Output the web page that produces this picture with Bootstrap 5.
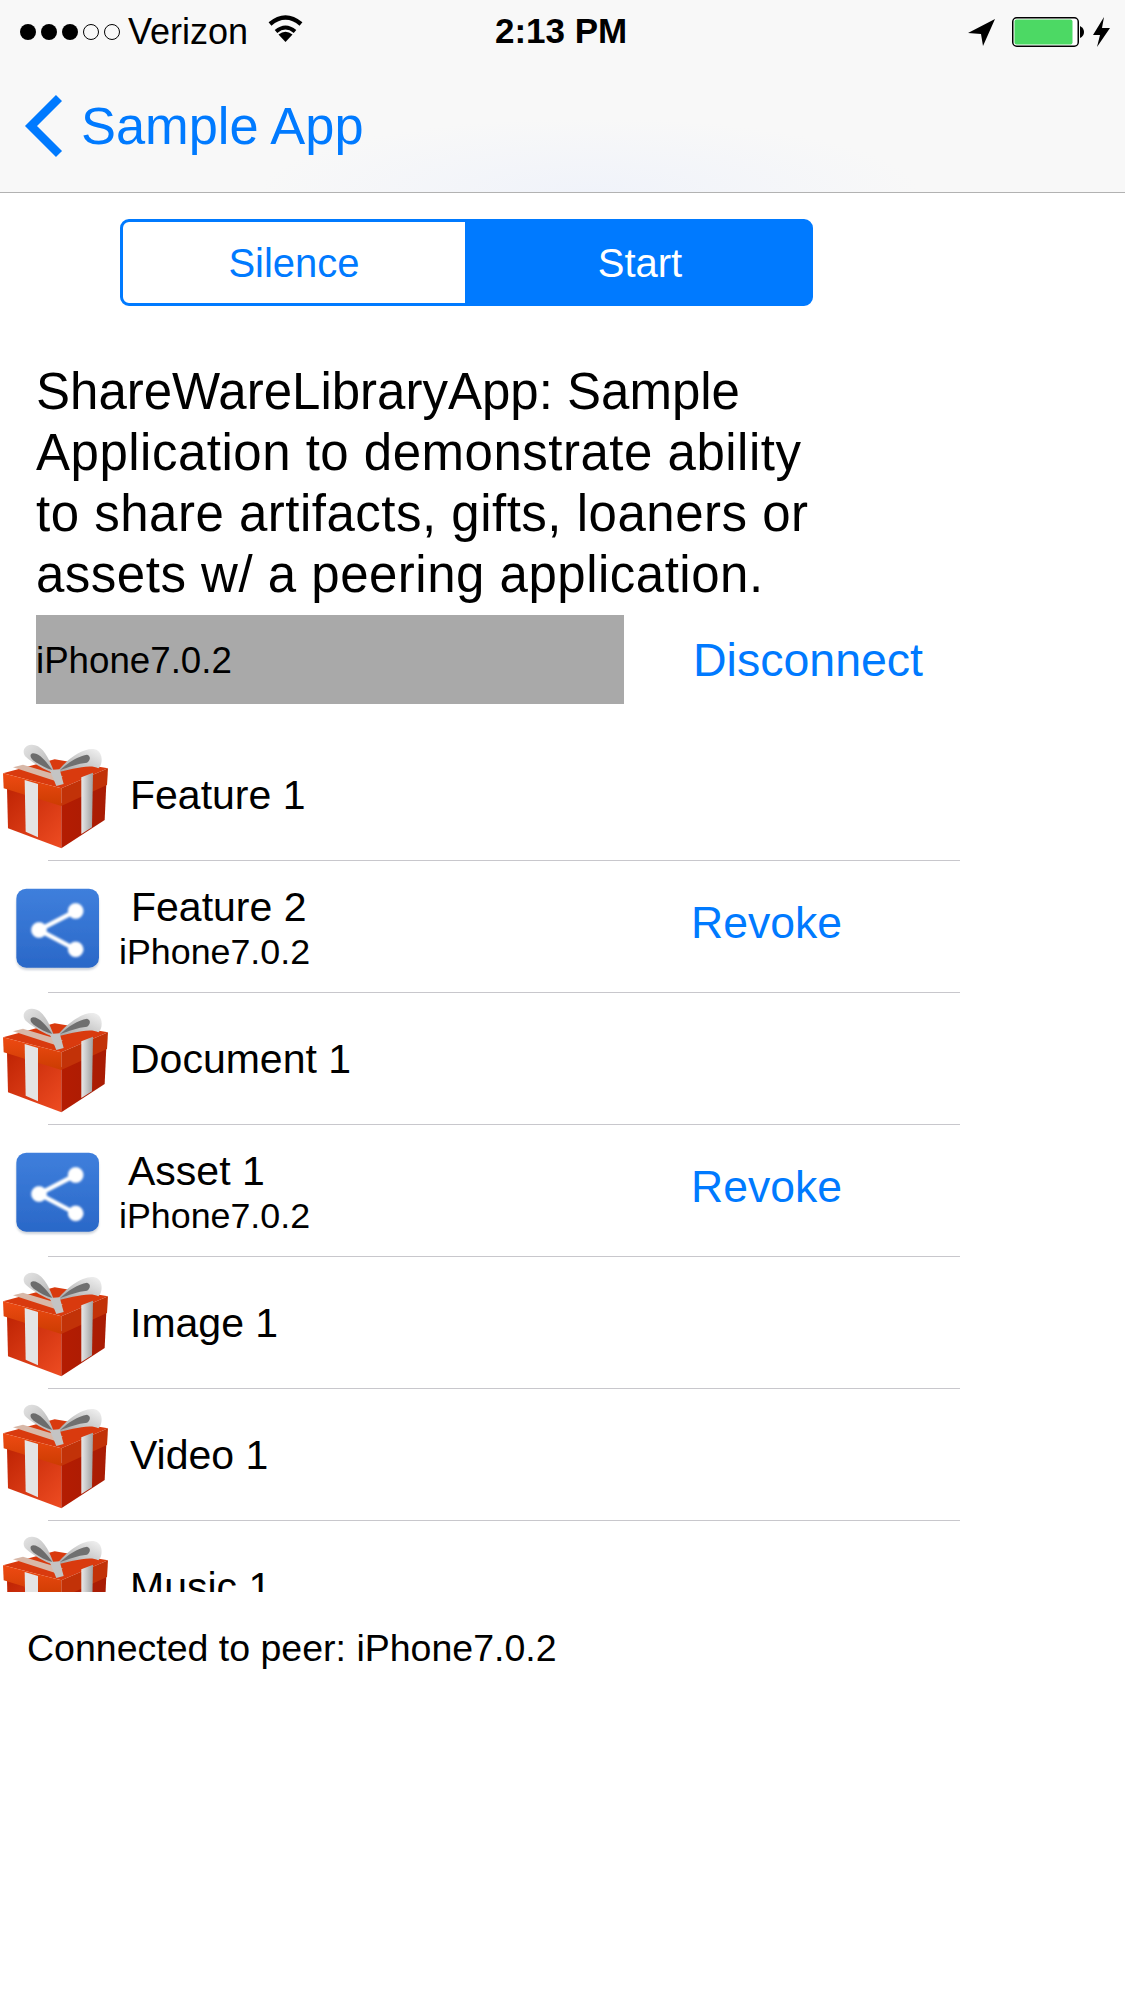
<!DOCTYPE html>
<html lang="en">
<head>
    <meta charset="UTF-8">
    <title>Sample App</title>
    <link href="https://cdn.jsdelivr.net/npm/bootstrap@5.3.2/dist/css/bootstrap.min.css" rel="stylesheet">
    <style>
        body {
            font-family: "Liberation Sans", Arial, sans-serif;
            background: #fff;
            color: #000;
            overflow: hidden;
        }
        .app-head {
            height: 193px;
            border-bottom: 1px solid #b2b2b2;
            background: radial-gradient(ellipse 330px 75px at 590px 193px, #f0f3fa, rgba(240, 243, 250, 0)), #f8f8f8;
        }
        .status-line {
            height: 64px;
            padding: 0 15px 0 20px;
            position: relative;
            font-size: 36px;
            line-height: 62px;
        }
        .status-time {
            position: absolute;
            left: 495px;
            top: 0;
            font-size: 35px;
            font-weight: 700;
        }
        .back-link {
            color: #007aff;
            font-size: 52.4px;
            line-height: 64px;
            padding: 30px 0 0 24px;
            text-decoration: none;
        }
        .back-link svg { margin-right: 17px; }
        .seg-group {
            width: 693px;
            height: 87px;
            margin: 26px 0 0 120px;
        }
        .seg-group .btn {
            font-size: 40px;
            line-height: 1;
            border: 3px solid #007aff;
            border-radius: 9px;
            color: #007aff;
            background: #fff;
            padding: 0;
        }
        .seg-group .btn:first-child { flex: 0 0 348px; }
        .seg-group .btn.active {
            color: #fff;
            background: #007aff;
        }
        .intro-text {
            width: 790px;
            margin: 55px 0 0 36px;
            font-size: 51px;
            line-height: 61px;
            letter-spacing: .5px;
        }
        .intro-first { letter-spacing: 0; }
        .peer-line {
            margin: 10px 0 0 36px;
        }
        .peer-name {
            width: 588px;
            height: 89px;
            background: #a9a9a9;
            font-size: 36.7px;
            padding-top: 2px;
        }
        .peer-btn {
            margin-left: 69px;
            padding: 2px 0 0;
            border: 0;
            font-size: 46.5px;
            color: #007aff;
        }
        .feat-list {
            height: 863px;
            margin-top: 25px;
            overflow: hidden;
            border-radius: 0;
        }
        .feat-row {
            height: 131px;
            flex: none;
            border: 0;
            padding: 0;
            color: #000;
            background: none;
        }
        .feat-sep {
            height: 1px;
            width: 912px;
            margin-left: 48px;
            flex: none;
            background: #c8c7cc;
        }
        .ico-gift { width: 105px; height: 105px; margin: 15px 0 0 3px; flex: none; }
        .ico-share { width: 90px; height: 90px; margin: 25px 0 0 13px; flex: none; }
        .feat-name {
            font-size: 41px;
            line-height: 48px;
            margin: 42px 0 0 22px;
        }
        .feat-two { width: 572px; margin: 22px 0 0 16px; flex: none; }
        .feat-two .feat-name { margin: 0 0 0 12px; }
        .feat-two .asset-name { margin-left: 9px; }
        .feat-peer {
            font-size: 35.8px;
            line-height: 40px;
            margin-top: 1px;
        }
        .feat-act {
            font-size: 44.5px;
            color: #007aff;
            padding: 0;
            border: 0;
            margin-top: 29px;
        }
        .conn-note {
            margin: 34px 0 0 27px;
            font-size: 37.5px;
            line-height: 44px;
        }
    </style>
</head>
<body>
    <!-- shared icons -->
    <svg width="0" height="0" style="position:absolute">
        <defs>
            <linearGradient id="gLeft" x1="0" y1="0" x2="1" y2="1">
                <stop offset="0" stop-color="#bf2404"/><stop offset="1" stop-color="#ee4c22"/>
            </linearGradient>
            <linearGradient id="gRight" x1="0" y1="0" x2="1" y2="0">
                <stop offset="0" stop-color="#b41c02"/><stop offset="1" stop-color="#a81c04"/>
            </linearGradient>
            <linearGradient id="gLid" x1="0" y1="0" x2="0" y2="1">
                <stop offset="0" stop-color="#ee4a12"/><stop offset="1" stop-color="#cc3c02"/>
            </linearGradient>
            <linearGradient id="gRib" x1="0" y1="0" x2="1" y2="0">
                <stop offset="0" stop-color="#e8e8e8"/><stop offset="1" stop-color="#a0a0a0"/>
            </linearGradient>
            <linearGradient id="gBowL" x1="0" y1="0" x2="1" y2="1">
                <stop offset="0" stop-color="#e4e4e4"/><stop offset="1" stop-color="#b0b0b0"/>
            </linearGradient>
            <linearGradient id="gBowR" x1="0" y1="1" x2="1" y2="0">
                <stop offset="0" stop-color="#a0a0a0"/><stop offset="1" stop-color="#f4f4f4"/>
            </linearGradient>
            <linearGradient id="gShare" x1="0" y1="0" x2="0" y2="1">
                <stop offset="0" stop-color="#3f7fdc"/><stop offset="1" stop-color="#2a68c8"/>
            </linearGradient>
            <filter id="fSoft"><feGaussianBlur stdDeviation="2.5"/></filter>
            <filter id="fEdge"><feGaussianBlur stdDeviation="1"/></filter>
            <symbol id="giftIcon" viewBox="10 72 315 315">
                <polygon points="22,205 185,250 185,385 25,325" fill="url(#gLeft)"/>
                <polygon points="185,250 320,190 315,300 185,385" fill="url(#gRight)"/>
                <polygon points="10,160 165,118 325,145 185,205" fill="#d93a0e"/>
                <polygon points="10,160 185,205 185,258 12,205" fill="url(#gLid)"/>
                <polygon points="185,205 325,145 322,195 185,258" fill="#c23208"/>
                <polygon points="75,180 115,192 115,352 78,335" fill="#e4e4e4"/>
                <polygon points="245,172 280,158 277,322 245,342" fill="url(#gRib)"/>
                <polygon points="40,142 70,134 190,170 165,182" fill="#d8b8a8"/>
                <path d="M165 160C150 120 130 72 95 74C70 76 66 100 80 112C100 130 135 150 165 160Z" fill="url(#gBowL)"/>
                <path d="M158 150C140 125 120 100 100 100C88 102 92 115 102 122C120 135 140 145 158 150Z" fill="#6c6c6c"/>
                <path d="M170 158C200 120 250 82 285 88C312 94 310 135 296 145C270 130 210 150 170 158Z" fill="url(#gBowR)"/>
                <path d="M182 150C205 128 235 108 262 104C275 108 272 122 262 128C235 130 205 142 182 150Z" fill="#707070"/>
                <polygon points="150,150 180,148 192,192 170,198" fill="#c4c4c4"/>
            </symbol>
            <symbol id="shareIcon" viewBox="40 500 270 270">
                <rect x="50" y="520" width="248" height="232" rx="30" fill="#9aa6b8" opacity=".5" filter="url(#fSoft)"/>
                <rect x="50" y="508" width="248" height="237" rx="30" fill="url(#gShare)" filter="url(#fEdge)"/>
                <g fill="#fff" stroke="#fff" filter="url(#fSoft)">
                    <path d="M228 575L118 632L228 690" fill="none" stroke-width="13"/>
                    <circle cx="228" cy="575" r="23"/>
                    <circle cx="118" cy="632" r="23"/>
                    <circle cx="228" cy="690" r="23"/>
                </g>
            </symbol>
        </defs>
    </svg>

    <header class="app-head">
        <div class="status-line d-flex align-items-center">
            <svg width="100" height="20" viewBox="0 0 100 20">
                <circle cx="8" cy="10" r="8"/><circle cx="29" cy="10" r="8"/><circle cx="50" cy="10" r="8"/>
                <circle cx="71" cy="10" r="7.5" fill="none" stroke="#000"/><circle cx="92" cy="10" r="7.5" fill="none" stroke="#000"/>
            </svg>
            <span class="ms-2">Verizon</span>
            <svg class="mb-2" style="margin-left:19px" width="37" height="28" viewBox="0 0 37 28">
                <path d="M18.5 28L11.5 20.5Q18.5 15 25.5 20.5Z"/>
                <path d="M9 17.5Q18.5 9.5 28 17.5" fill="none" stroke="#000" stroke-width="4"/>
                <path d="M3 10Q18.5 -3 34 10" fill="none" stroke="#000" stroke-width="4.4"/>
            </svg>
            <span class="status-time">2:13 PM</span>
            <div class="ms-auto d-flex align-items-center">
                <svg width="28" height="27" viewBox="0 0 28 27"><path d="M0 14L27 0L15 27L13 15Z"/></svg>
                <svg class="ms-3" width="73" height="30" viewBox="0 0 73 30">
                    <rect x=".75" y=".75" width="65.5" height="28.5" rx="4" fill="#fff" stroke="#000" stroke-width="1.5"/>
                    <rect x="2.5" y="2.5" width="58" height="25" rx="2" fill="#4cd964"/>
                    <path d="M68 9Q72 11 72 15Q72 19 68 21Z"/>
                </svg>
                <svg class="ms-2" width="17" height="30" viewBox="0 0 17 30"><path d="M11 0L0 18H7L4 30L17 11H9Z"/></svg>
            </div>
        </div>
        <a class="back-link d-flex align-items-center" href="#">
            <svg width="40" height="64" viewBox="0 0 40 64">
                <polyline points="35,4 7,32 35,60" fill="none" stroke="#007aff" stroke-width="8.5"/>
            </svg>
            Sample App
        </a>
    </header>

    <div class="btn-group seg-group d-flex" role="group">
        <button type="button" class="btn">Silence</button>
        <button type="button" class="btn active">Start</button>
    </div>

    <p class="intro-text mb-0"><span class="intro-first">ShareWareLibraryApp: Sample</span> Application to demonstrate ability to share artifacts, gifts, loaners or assets w/ a peering application.</p>

    <div class="peer-line d-flex align-items-center">
        <div class="peer-name d-flex align-items-center">iPhone7.0.2</div>
        <button type="button" class="btn peer-btn">Disconnect</button>
    </div>

    <div class="list-group feat-list">
        <div class="list-group-item feat-row d-flex align-items-start">
            <svg class="ico-gift"><use href="#giftIcon"/></svg>
            <div class="feat-name">Feature 1</div>
        </div>
        <div class="feat-sep"></div>
        <div class="list-group-item feat-row d-flex align-items-start">
            <svg class="ico-share"><use href="#shareIcon"/></svg>
            <div class="feat-two">
                <div class="feat-name">Feature 2</div>
                <div class="feat-peer">iPhone7.0.2</div>
            </div>
            <button type="button" class="btn feat-act">Revoke</button>
        </div>
        <div class="feat-sep"></div>
        <div class="list-group-item feat-row d-flex align-items-start">
            <svg class="ico-gift"><use href="#giftIcon"/></svg>
            <div class="feat-name">Document 1</div>
        </div>
        <div class="feat-sep"></div>
        <div class="list-group-item feat-row d-flex align-items-start">
            <svg class="ico-share"><use href="#shareIcon"/></svg>
            <div class="feat-two">
                <div class="feat-name asset-name">Asset 1</div>
                <div class="feat-peer">iPhone7.0.2</div>
            </div>
            <button type="button" class="btn feat-act">Revoke</button>
        </div>
        <div class="feat-sep"></div>
        <div class="list-group-item feat-row d-flex align-items-start">
            <svg class="ico-gift"><use href="#giftIcon"/></svg>
            <div class="feat-name">Image 1</div>
        </div>
        <div class="feat-sep"></div>
        <div class="list-group-item feat-row d-flex align-items-start">
            <svg class="ico-gift"><use href="#giftIcon"/></svg>
            <div class="feat-name">Video 1</div>
        </div>
        <div class="feat-sep"></div>
        <div class="list-group-item feat-row d-flex align-items-start">
            <svg class="ico-gift"><use href="#giftIcon"/></svg>
            <div class="feat-name">Music 1</div>
        </div>
    </div>

    <p class="conn-note">Connected to peer: iPhone7.0.2</p>

    <script src="https://cdn.jsdelivr.net/npm/bootstrap@5.3.2/dist/js/bootstrap.bundle.min.js"></script>
</body>
</html>
